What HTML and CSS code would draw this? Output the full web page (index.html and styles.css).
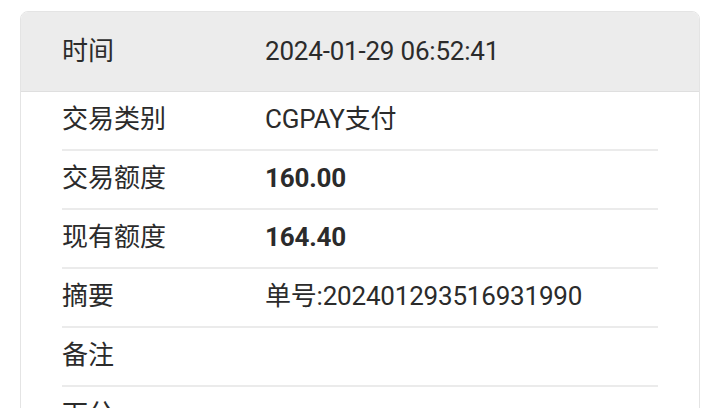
FILE: index.html
```html
<!DOCTYPE html>
<html lang="zh">
<head>
<meta charset="utf-8">
<link rel="stylesheet" href="styles.css">
</head>
<body>
<div class="card">
  <div class="header">
    <span class="label">时间</span>
    <span class="value">2024-01-29 06:52:41</span>
  </div>
  <div class="rows">
    <div class="row"><span class="label">交易类别</span><span class="value">CGPAY支付</span></div>
    <div class="row"><span class="label">交易额度</span><span class="value bold">160.00</span></div>
    <div class="row"><span class="label">现有额度</span><span class="value bold">164.40</span></div>
    <div class="row"><span class="label">摘要</span><span class="value">单号:202401293516931990</span></div>
    <div class="row"><span class="label">备注</span><span class="value"></span></div>
    <div class="row"><span class="label">下分</span><span class="value"></span></div>
  </div>
</div>
</body>
</html>
```
FILE: styles.css
```css
html, body {
  margin: 0;
  padding: 0;
  background: #ffffff;
}
body {
  font-family: Roboto, "Noto Sans CJK SC", sans-serif;
  color: #2b2b2b;
  font-size: 26px;
  line-height: 1;
  padding-top: 11px;
  height: 408px;
  overflow: hidden;
}
.card {
  margin: 0 20px;
  border: 1px solid #e4e4e4;
  border-radius: 8px;
  overflow: hidden;
  height: 500px;
}
.header {
  display: flex;
  align-items: center;
  height: 79px;
  background: #ececec;
  border-bottom: 1px solid #dfdfdf;
  padding: 0 41px 2px;
  box-sizing: border-box;
  height: 80px;
}
.rows {
  padding: 0 41px;
}
.row {
  display: flex;
  align-items: center;
  height: 57px;
  padding-bottom: 3px;
  box-sizing: border-box;
  height: 59px;
  border-bottom: 2px solid #ebebeb;
}
.label {
  width: 203px;
  flex: none;
  font-size: 26px;
}
.value {
  letter-spacing: -0.2px;
}
.bold {
  font-weight: 700;
}
```
